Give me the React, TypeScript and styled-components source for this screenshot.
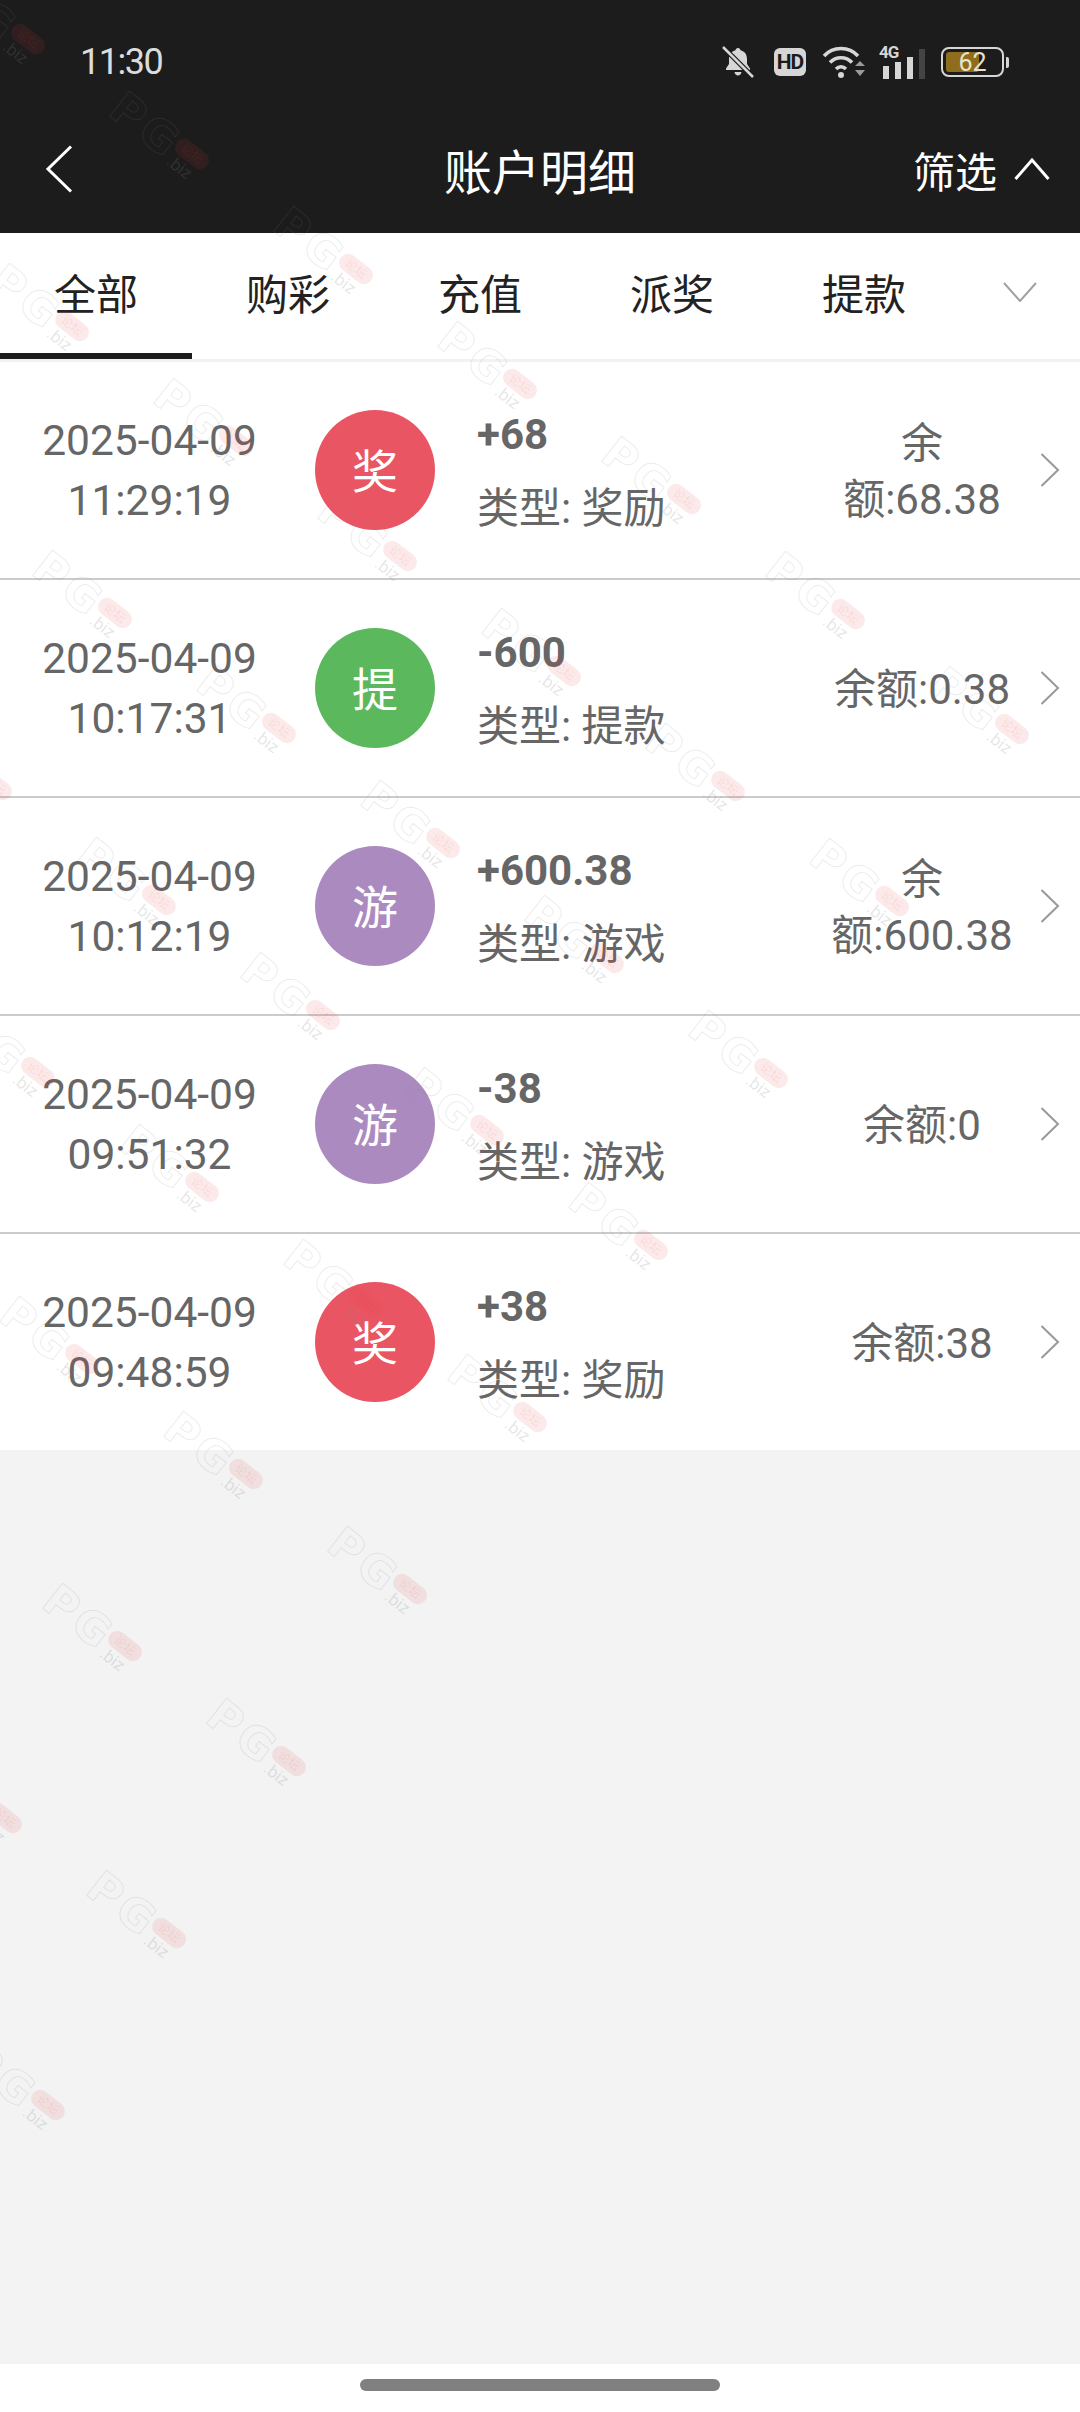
import React from 'react'
import styled, { createGlobalStyle } from 'styled-components'

const GlobalStyle = createGlobalStyle`
	html, body {
		margin: 0;
		padding: 0;
		background: #f3f3f3;
	}
	* {
		box-sizing: border-box;
	}
`

const sans = `Roboto, "Noto Sans CJK SC", sans-serif`

type Kind = 'reward' | 'withdraw' | 'game'

interface Record {
	date: string
	time: string
	badge: string
	kind: Kind
	amount: string
	type: string
	balance: string
}

const records: Record[] = [
	{ date: '2025-04-09', time: '11:29:19', badge: '奖', kind: 'reward', amount: '+68', type: '奖励', balance: '余额:68.38' },
	{ date: '2025-04-09', time: '10:17:31', badge: '提', kind: 'withdraw', amount: '-600', type: '提款', balance: '余额:0.38' },
	{ date: '2025-04-09', time: '10:12:19', badge: '游', kind: 'game', amount: '+600.38', type: '游戏', balance: '余额:600.38' },
	{ date: '2025-04-09', time: '09:51:32', badge: '游', kind: 'game', amount: '-38', type: '游戏', balance: '余额:0' },
	{ date: '2025-04-09', time: '09:48:59', badge: '奖', kind: 'reward', amount: '+38', type: '奖励', balance: '余额:38' },
]

const tabs = ['全部', '购彩', '充值', '派奖', '提款']

const badgeColors: { [key in Kind]: string } = {
	reward: '#ea5563',
	withdraw: '#5cb85c',
	game: '#ab8bbf',
}

// watermark tiles sit on a slanted lattice, only the upper left triangle of it is filled
const marks: { x: number; y: number }[] = []
for (let m = 0; m < 9; m++) {
	for (let k = -6; k + m <= 5; k++) {
		const x = 192 + k * 164 + m * 43.5
		const y = 154 + k * 115 + m * 287
		if (x > -60 && x < 1140 && y > -20 && y < 2350) marks.push({ x, y })
	}
}

const App: React.FC = () => {
	return (
		<Page>
			<GlobalStyle />
			<Header>
				<StatusBar>
					<Clock>11:30</Clock>
					<StatusIcons>
						<BellIcon width="32" height="32" viewBox="0 0 32 32">
							<path d="M16 2c1.500 0 2.400 1 2.500 2.300 4.200 1 6.500 4.400 6.500 8.700v5l3 4.500v1.500H4v-1.500L7 18v-5c0-4.300 2.300-7.700 6.500-8.700C13.600 3 14.500 2 16 2zM12.500 26h7c-.3 2-1.700 3.500-3.500 3.500s-3.200-1.500-3.500-3.500z" fill="#d6d6d6" />
							<path d="M1 1l30 30" stroke="#1c1c1c" strokeWidth="5" />
							<path d="M1 1l30 30" stroke="#d6d6d6" strokeWidth="2.500" />
						</BellIcon>
						<HdBadge>HD</HdBadge>
						<WifiIcon width="44" height="34" viewBox="0 0 44 34">
							<path d="M2 11C11 1 27 1 36 11" stroke="#d6d6d6" strokeWidth="3.500" fill="none" />
							<path d="M8 17.500C14 11 24 11 30 17.500" stroke="#d6d6d6" strokeWidth="3.500" fill="none" />
							<path d="M14 24c3-3 7-3 10 0" stroke="#d6d6d6" strokeWidth="3.500" fill="none" />
							<circle cx="19" cy="30" r="3" fill="#d6d6d6" />
							<path d="M33 21l5-5 5 5zM33 25h10l-5 6z" fill="#9a9a9a" />
						</WifiIcon>
						<SignalBox>
							<SignalLabel>4G</SignalLabel>
							<svg width="46" height="30" viewBox="0 0 46 30">
								<rect x="4" y="17" width="6" height="13" fill="#d6d6d6" />
								<rect x="16" y="13" width="6" height="17" fill="#d6d6d6" />
								<rect x="28" y="8" width="6" height="22" fill="#d6d6d6" />
								<rect x="40" y="0" width="6" height="30" fill="#444" />
							</svg>
						</SignalBox>
						<Battery>
							<BatteryFill />
							<BatteryText>62</BatteryText>
							<BatteryCap />
						</Battery>
					</StatusIcons>
				</StatusBar>
				<NavBar>
					<svg width="28" height="48" viewBox="0 0 28 48">
						<path d="M26 1.500L3 24l23 22.500" stroke="#fff" strokeWidth="3" fill="none" />
					</svg>
					<Title>账户明细</Title>
					<FilterButton>
						筛选
						<svg width="36" height="22" viewBox="0 0 36 22">
							<path d="M1.500 21L18 2l16.500 19" stroke="#fff" strokeWidth="3" fill="none" />
						</svg>
					</FilterButton>
				</NavBar>
			</Header>

			<TabBar>
				{tabs.map((tab, i) => (
					<Tab key={tab} $active={i === 0}>{tab}</Tab>
				))}
				<TabMore>
					<svg width="34" height="20" viewBox="0 0 34 20">
						<path d="M1 1l16 18L33 1" stroke="#a0a0a0" strokeWidth="2" fill="none" />
					</svg>
				</TabMore>
			</TabBar>

			<List>
				{records.map((item) => (
					<Row key={item.time}>
						<DateCol>
							<div>{item.date}</div>
							<div>{item.time}</div>
						</DateCol>
						<Badge $kind={item.kind}>{item.badge}</Badge>
						<Info>
							<Amount>{item.amount}</Amount>
							<TypeLine>类型: {item.type}</TypeLine>
						</Info>
						<Balance>{item.balance}</Balance>
						<svg width="20" height="34" viewBox="0 0 20 34">
							<path d="M1.500 1L18 17 1.500 33" stroke="#999" strokeWidth="2" fill="none" />
						</svg>
					</Row>
				))}
			</List>

			<Filler />
			<HomeArea>
				<HomeBar />
			</HomeArea>

			<Watermarks>
				{marks.map((mark) => (
					<Mark key={`${mark.x}-${mark.y}`} style={{ left: mark.x - 78, top: mark.y - 34 }}>
						<MarkLetters>PG</MarkLetters>
						<MarkPill>论坛</MarkPill>
						<MarkDomain>.biz</MarkDomain>
					</Mark>
				))}
			</Watermarks>
		</Page>
	)
}

const Page = styled.div`
	position: relative;
	width: 1080px;
	height: 2412px;
	overflow: hidden;
	display: flex;
	flex-direction: column;
	font-family: ${sans};
	background: #f3f3f3;
`

const Header = styled.header`
	height: 233px;
	background: #1c1c1c;
	color: #fff;
	flex: none;
`

const StatusBar = styled.div`
	height: 124px;
	display: flex;
	align-items: center;
	justify-content: space-between;
	padding: 0 76px 0 80px;
`

const Clock = styled.span`
	font-size: 36px;
	letter-spacing: -1.500px;
	color: #dcdcdc;
`

const StatusIcons = styled.div`
	display: flex;
	align-items: center;
	gap: 16px;
`

const BellIcon = styled.svg`
	margin-right: 4px;
`

const WifiIcon = styled.svg`
	margin-right: -3px;
`

const HdBadge = styled.span`
	width: 32px;
	height: 28px;
	border-radius: 6px;
	background: #d6d6d6;
	color: #1c1c1c;
	font-size: 21px;
	font-weight: 700;
	letter-spacing: -1px;
	display: flex;
	align-items: center;
	justify-content: center;
`

const SignalBox = styled.div`
	position: relative;
	width: 46px;
	height: 34px;
	display: flex;
	align-items: flex-end;
`

const SignalLabel = styled.span`
	position: absolute;
	left: 0;
	top: -3px;
	font-size: 17px;
	font-weight: 700;
	letter-spacing: -1px;
	color: #d6d6d6;
`

const Battery = styled.div`
	position: relative;
	width: 63px;
	height: 30px;
	border: 2px solid #d6d6d6;
	border-radius: 8px;
	display: flex;
	align-items: center;
	justify-content: center;
`

const BatteryFill = styled.div`
	position: absolute;
	left: 3px;
	top: 3px;
	bottom: 3px;
	width: 33px;
	background: #8f6d1c;
	border-radius: 3px;
`

const BatteryText = styled.span`
	position: relative;
	font-size: 25px;
	color: #e8e2cc;
`

const BatteryCap = styled.div`
	position: absolute;
	right: -7px;
	top: 8px;
	width: 3px;
	height: 11px;
	background: #d6d6d6;
	border-radius: 0 2px 2px 0;
`

const NavBar = styled.div`
	height: 109px;
	display: grid;
	grid-template-columns: 1fr auto 1fr;
	align-items: center;
	padding: 0 30px 19px 30px;
	& > svg {
		margin-left: 15px;
	}
`

const Title = styled.h1`
	margin: 0;
	font-size: 48px;
	font-weight: 400;
	color: #fff;
`

const FilterButton = styled.div`
	justify-self: end;
	display: flex;
	align-items: center;
	gap: 17px;
	font-size: 42px;
	color: #fff;
`

const TabBar = styled.nav`
	height: 129px;
	flex: none;
	display: flex;
	background: #fff;
	border-bottom: 3px solid #f2f2f2;
`

const Tab = styled.div<{ $active: boolean }>`
	width: 192px;
	display: flex;
	align-items: center;
	justify-content: center;
	padding-bottom: 4px;
	font-size: 42px;
	color: #222;
	border-bottom: 6px solid ${(props) => (props.$active ? '#1c1c1c' : 'transparent')};
`

const TabMore = styled.div`
	flex: 1;
	display: flex;
	align-items: center;
	justify-content: center;
	padding: 0 0 8px 0;
`

const List = styled.div`
	flex: none;
	background: #fff;
`

const Row = styled.div`
	height: 218px;
	display: flex;
	align-items: center;
	color: #666;
	border-bottom: 2px solid #cbcbcb;
	padding-right: 20px;
	&:last-child {
		border-bottom: none;
		height: 216px;
	}
`

const DateCol = styled.div`
	width: 299px;
	flex: none;
	padding-top: 1px;
	margin-right: 1px;
	text-align: center;
	font-size: 42.500px;
	line-height: 60px;
`

const Badge = styled.div<{ $kind: Kind }>`
	width: 120px;
	height: 120px;
	flex: none;
	margin-left: 15px;
	border-radius: 50%;
	background: ${(props) => badgeColors[props.$kind]};
	color: #fff;
	font-size: 46px;
	padding-bottom: 4px;
	display: flex;
	align-items: center;
	justify-content: center;
`

const Info = styled.div`
	flex: 1;
	margin-left: 42px;
	padding-top: 3px;
	display: flex;
	flex-direction: column;
	gap: 13px;
`

const Amount = styled.div`
	font-size: 42px;
	line-height: 61px;
	font-weight: 700;
`

const TypeLine = styled.div`
	font-size: 42px;
	line-height: 61px;
`

const Balance = styled.div`
	width: 192px;
	flex: none;
	margin: 0 22px 0 3px;
	padding-top: 4px;
	text-align: center;
	font-size: 42px;
	line-height: 56px;
`

const Filler = styled.div`
	flex: 1;
	background: #f3f3f3;
`

const HomeArea = styled.div`
	height: 48px;
	flex: none;
	background: #fff;
	display: flex;
	justify-content: center;
	padding-top: 15px;
`

const HomeBar = styled.div`
	width: 360px;
	height: 12px;
	border-radius: 6px;
	background: #808080;
`

const Watermarks = styled.div`
	position: absolute;
	inset: 0 0 48px 0;
	overflow: hidden;
	pointer-events: none;
`

const Mark = styled.div`
	position: absolute;
	width: 110px;
	height: 60px;
	transform: rotate(38deg);
	transform-origin: 78px 34px;
`

const MarkLetters = styled.span`
	position: absolute;
	left: -14px;
	top: 17px;
	font-family: "DejaVu Sans", sans-serif;
	font-size: 44px;
	font-weight: 700;
	line-height: 46px;
	letter-spacing: 4px;
	color: transparent;
	-webkit-text-stroke: 1px rgba(130, 130, 130, 0.17);
`

const MarkPill = styled.span`
	position: absolute;
	left: 59px;
	top: 25px;
	width: 38px;
	height: 18px;
	border-radius: 9px;
	background: rgba(232, 60, 60, 0.11);
	color: rgba(232, 60, 60, 0.12);
	font-size: 12px;
	line-height: 18px;
	text-align: center;
`

const MarkDomain = styled.span`
	position: absolute;
	left: 63px;
	top: 43px;
	font-size: 17px;
	line-height: 18px;
	color: rgba(130, 130, 130, 0.2);
`

export default App
